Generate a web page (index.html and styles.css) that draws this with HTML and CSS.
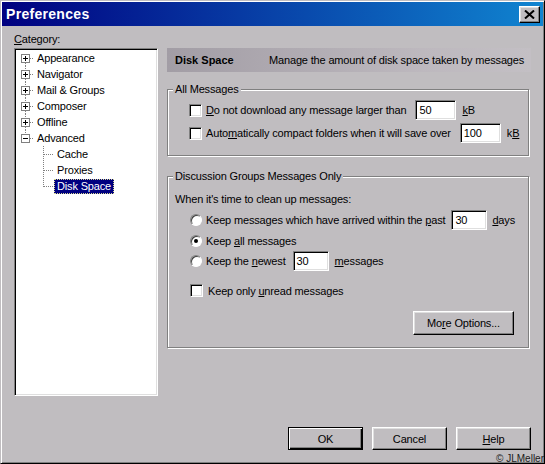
FILE: index.html
```html
<!DOCTYPE html>
<html>
<head>
<meta charset="utf-8">
<link rel="stylesheet" href="styles.css">
</head>
<body>
<div class="window">
  <div class="titlebar">
    <span class="title">Preferences</span>
    <button class="close" type="button" aria-label="Close">
      <svg width="11" height="9" viewBox="0 0 11 9"><path d="M1 0.5 L10 8.5 M10 0.5 L1 8.5" stroke="#000" stroke-width="2" fill="none"/></svg>
    </button>
  </div>
  <div class="main">
    <div class="left">
      <div class="cat-label"><u>C</u>ategory:</div>
      <div class="tree">
        <div class="trow">
          <svg class="twig" width="18" height="16" viewBox="0 0 18 16">
            <path class="dots" d="M9.5 13 V16 M14 8.5 H18"/>
            <rect x="5.5" y="4.5" width="8" height="8" fill="#fff" stroke="#808080"/>
            <path d="M7 8.5 H12 M9.5 6 V11" stroke="#000"/>
          </svg>
          <span class="tlabel">Appearance</span>
        </div>
        <div class="trow">
          <svg class="twig" width="18" height="16" viewBox="0 0 18 16">
            <path class="dots" d="M9.5 0 V4 M9.5 13 V16 M14 8.5 H18"/>
            <rect x="5.5" y="4.5" width="8" height="8" fill="#fff" stroke="#808080"/>
            <path d="M7 8.5 H12 M9.5 6 V11" stroke="#000"/>
          </svg>
          <span class="tlabel">Navigator</span>
        </div>
        <div class="trow">
          <svg class="twig" width="18" height="16" viewBox="0 0 18 16">
            <path class="dots" d="M9.5 0 V4 M9.5 13 V16 M14 8.5 H18"/>
            <rect x="5.5" y="4.5" width="8" height="8" fill="#fff" stroke="#808080"/>
            <path d="M7 8.5 H12 M9.5 6 V11" stroke="#000"/>
          </svg>
          <span class="tlabel">Mail &amp; Groups</span>
        </div>
        <div class="trow">
          <svg class="twig" width="18" height="16" viewBox="0 0 18 16">
            <path class="dots" d="M9.5 0 V4 M9.5 13 V16 M14 8.5 H18"/>
            <rect x="5.5" y="4.5" width="8" height="8" fill="#fff" stroke="#808080"/>
            <path d="M7 8.5 H12 M9.5 6 V11" stroke="#000"/>
          </svg>
          <span class="tlabel">Composer</span>
        </div>
        <div class="trow">
          <svg class="twig" width="18" height="16" viewBox="0 0 18 16">
            <path class="dots" d="M9.5 0 V4 M9.5 13 V16 M14 8.5 H18"/>
            <rect x="5.5" y="4.5" width="8" height="8" fill="#fff" stroke="#808080"/>
            <path d="M7 8.5 H12 M9.5 6 V11" stroke="#000"/>
          </svg>
          <span class="tlabel">Offline</span>
        </div>
        <div class="trow">
          <svg class="twig" width="18" height="16" viewBox="0 0 18 16">
            <path class="dots" d="M9.5 0 V4 M14 8.5 H18"/>
            <rect x="5.5" y="4.5" width="8" height="8" fill="#fff" stroke="#808080"/>
            <path d="M7 8.5 H12" stroke="#000"/>
          </svg>
          <span class="tlabel">Advanced</span>
        </div>
        <div class="trow">
          <svg class="twig" width="38" height="16" viewBox="0 0 38 16">
            <path class="dots" d="M27.5 0 V16 M28 8.5 H38"/>
          </svg>
          <span class="tlabel">Cache</span>
        </div>
        <div class="trow">
          <svg class="twig" width="38" height="16" viewBox="0 0 38 16">
            <path class="dots" d="M27.5 0 V16 M28 8.5 H38"/>
          </svg>
          <span class="tlabel">Proxies</span>
        </div>
        <div class="trow">
          <svg class="twig" width="38" height="16" viewBox="0 0 38 16">
            <path class="dots" d="M27.5 0 V9 M28 8.5 H38"/>
          </svg>
          <span class="tlabel selected">Disk Space</span>
        </div>
      </div>
    </div>
    <div class="right">
      <div class="header">
        <span class="h-title">Disk Space</span>
        <span class="h-desc">Manage the amount of disk space taken by messages</span>
      </div>

      <div class="group g1">
        <span class="legend">All Messages</span>
        <div class="row">
          <span class="check"></span>
          <span class="lbl"><u>D</u>o not download any message larger than</span>
          <span class="field w41">50</span>
          <span class="unit"><u>k</u>B</span>
        </div>
        <div class="row row-2">
          <span class="check"></span>
          <span class="lbl">Auto<u>m</u>atically compact folders when it will save over</span>
          <span class="field w41">100</span>
          <span class="unit">k<u>B</u></span>
        </div>
      </div>

      <div class="group g2">
        <span class="legend">Discussion Groups Messages Only</span>
        <div class="intro">When it's time to clean up messages:</div>
        <div class="row rrow first">
          <span class="radio"></span>
          <span class="lbl">Keep messages which have arrived within the <u>p</u>ast</span>
          <span class="field w36 f-gap6">30</span>
          <span class="unit u-gap5"><u>d</u>ays</span>
        </div>
        <div class="row rrow second">
          <span class="radio on"></span>
          <span class="lbl">Keep <u>a</u>ll messages</span>
        </div>
        <div class="row rrow">
          <span class="radio"></span>
          <span class="lbl">Keep the <u>n</u>ewest</span>
          <span class="field w36 f-gap7">30</span>
          <span class="unit"><u>m</u>essages</span>
        </div>
        <div class="row crow">
          <span class="check c5"></span>
          <span class="lbl">Keep only <u>u</u>nread messages</span>
        </div>
        <div class="btnrow">
          <button class="btn more" type="button">Mo<u>r</u>e Options...</button>
        </div>
      </div>
    </div>
  </div>
  <div class="footer">
    <button class="btn default" type="button">OK</button>
    <button class="btn" type="button">Cancel</button>
    <button class="btn" type="button"><u>H</u>elp</button>
  </div>
  <div class="copyright">© JLMeller</div>
</div>
</body>
</html>
```
FILE: styles.css
```css
html, body {
  margin: 0;
  padding: 0;
  background: #c0bdc0;
}

body {
  font-family: "Liberation Sans", Arial, sans-serif;
  font-size: 11px;
  letter-spacing: -0.16px;
  color: #000;
}

u {
  text-decoration: underline;
  text-underline-offset: 1px;
}

.window {
  position: relative;
  width: 545px;
  height: 464px;
  box-sizing: border-box;
  border: 1px solid;
  border-color: #c0bdc0 #000 #000 #c0bdc0;
  padding: 1px;
  box-shadow: inset 1px 1px 0 #fff, inset -1px -1px 0 #808080;
  background: #c0bdc0;
  overflow: hidden;
}

.titlebar {
  height: 24px;
  display: flex;
  align-items: center;
  justify-content: space-between;
  padding: 0 3px 0 4px;
  background: linear-gradient(to right, #000080, #1084d0);
}

.title {
  color: #fff;
  font-weight: bold;
  font-size: 14px;
  letter-spacing: 0.3px;
}

.close {
  width: 21px;
  height: 17px;
  margin: 0;
  padding: 0;
  box-sizing: border-box;
  display: flex;
  align-items: center;
  justify-content: center;
  background: #c0bdc0;
  border: 1px solid;
  border-color: #fff #000 #000 #fff;
  box-shadow: inset -1px -1px 0 #808080, inset 1px 1px 0 #dfdfdf;
}

.main {
  display: flex;
  padding: 7px 0 0 12px;
}

.left {
  display: flex;
  flex-direction: column;
  width: 144px;
}

.cat-label {
  line-height: 13px;
  margin-bottom: 2px;
}

.tree {
  box-sizing: border-box;
  width: 144px;
  height: 348px;
  background: #fff;
  border: 1px solid;
  border-color: #808080 #fff #fff #808080;
  box-shadow: inset 1px 1px 0 #000, inset -1px -1px 0 #dfdfdf;
  padding: 1px;
}

.trow {
  display: flex;
  align-items: center;
  height: 16px;
}

.twig {
  display: block;
  flex: none;
  shape-rendering: crispEdges;
}

.dots {
  stroke: #808080;
  stroke-dasharray: 1 1;
  fill: none;
}

.tlabel {
  border: 1px solid transparent;
  padding: 0 2px;
  line-height: 13px;
  white-space: nowrap;
}

.tlabel.selected {
  background: #000080;
  color: #fff;
  border: 1px dotted #d8d890;
}

.right {
  margin-left: 9px;
  width: 364px;
  padding-top: 15px;
}

.header {
  height: 24px;
  display: flex;
  align-items: center;
  padding-left: 8px;
  background: linear-gradient(to right, #a29da5, #bdb8be 70%, #c3bfc4);
}

.h-title {
  width: 94px;
  font-weight: bold;
  letter-spacing: 0;
}

.h-desc {
  white-space: nowrap;
}

.group {
  position: relative;
  margin-right: 2px;
  border: 1px solid #808080;
  box-shadow: inset 1px 1px 0 #fff, 1px 1px 0 #fff;
}

.legend {
  position: absolute;
  top: -7px;
  left: 5px;
  padding: 0 2px;
  line-height: 13px;
  background: #c0bdc0;
  white-space: nowrap;
}

.g1 {
  margin-top: 17px;
  padding: 10px 0 12px 21px;
}

.g2 {
  margin-top: 20px;
  padding: 16px 14px 12px 7px;
}

.row {
  display: flex;
  align-items: center;
  height: 20px;
  white-space: nowrap;
}

.row-2 {
  margin-top: 3px;
}

.intro {
  line-height: 13px;
  margin-bottom: 4px;
}

.rrow {
  margin-left: 15px;
}

.rrow.second {
  margin-top: 1px;
}

.crow {
  margin-left: 15px;
  margin-top: 13px;
  height: 13px;
}

.check {
  flex: none;
  box-sizing: border-box;
  width: 13px;
  height: 13px;
  margin-right: 4px;
  background: #fff;
  border: 1px solid;
  border-color: #808080 #fff #fff #808080;
  box-shadow: inset 1px 1px 0 #000, inset -1px -1px 0 #dfdfdf;
}

.check.c5 {
  margin-right: 5px;
}

.radio {
  position: relative;
  flex: none;
  box-sizing: border-box;
  width: 12px;
  height: 12px;
  margin-right: 4px;
  border-radius: 50%;
  background: #fff;
  border: 1px solid;
  border-color: #808080 #fff #fff #808080;
  box-shadow: inset 1px 1px 0 #404040;
}

.radio.on::after {
  content: "";
  position: absolute;
  left: 3px;
  top: 3px;
  width: 4px;
  height: 4px;
  border-radius: 50%;
  background: #000;
}

.field {
  flex: none;
  box-sizing: border-box;
  height: 20px;
  margin-left: 9px;
  margin-right: 6px;
  padding: 0 3px;
  line-height: 18px;
  background: #fff;
  border: 1px solid;
  border-color: #808080 #fff #fff #808080;
  box-shadow: inset 1px 1px 0 #000, inset -1px -1px 0 #dfdfdf;
}

.w41 { width: 41px; }
.w36 { width: 36px; }

.f-gap6 { margin-left: 6px; }
.f-gap7 { margin-left: 7px; }
.u-gap5 { margin-left: -1px; }

.btnrow {
  display: flex;
  justify-content: flex-end;
  margin-top: 14px;
}

.btn {
  box-sizing: border-box;
  height: 23px;
  width: 75px;
  margin: 0;
  padding: 0;
  font-family: "Liberation Sans", Arial, sans-serif;
  font-size: 11px;
  letter-spacing: -0.16px;
  color: #000;
  background: #c0bdc0;
  border: 1px solid;
  border-color: #fff #000 #000 #fff;
  box-shadow: inset -1px -1px 0 #808080, inset 1px 1px 0 #dfdfdf;
}

.btn.more {
  width: 101px;
  height: 24px;
}

.btn.default {
  border: 1px solid #000;
  box-shadow: inset 1px 1px 0 #fff, inset -1px -1px 0 #000, inset -2px -2px 0 #808080;
}

.footer {
  display: flex;
  justify-content: flex-end;
  gap: 9px;
  margin-top: 31px;
  padding-right: 12px;
}

.copyright {
  position: absolute;
  right: 0;
  bottom: -1px;
  font-size: 10px;
  line-height: 11px;
  letter-spacing: 0;
  color: #1a1a1a;
  white-space: nowrap;
}
```
